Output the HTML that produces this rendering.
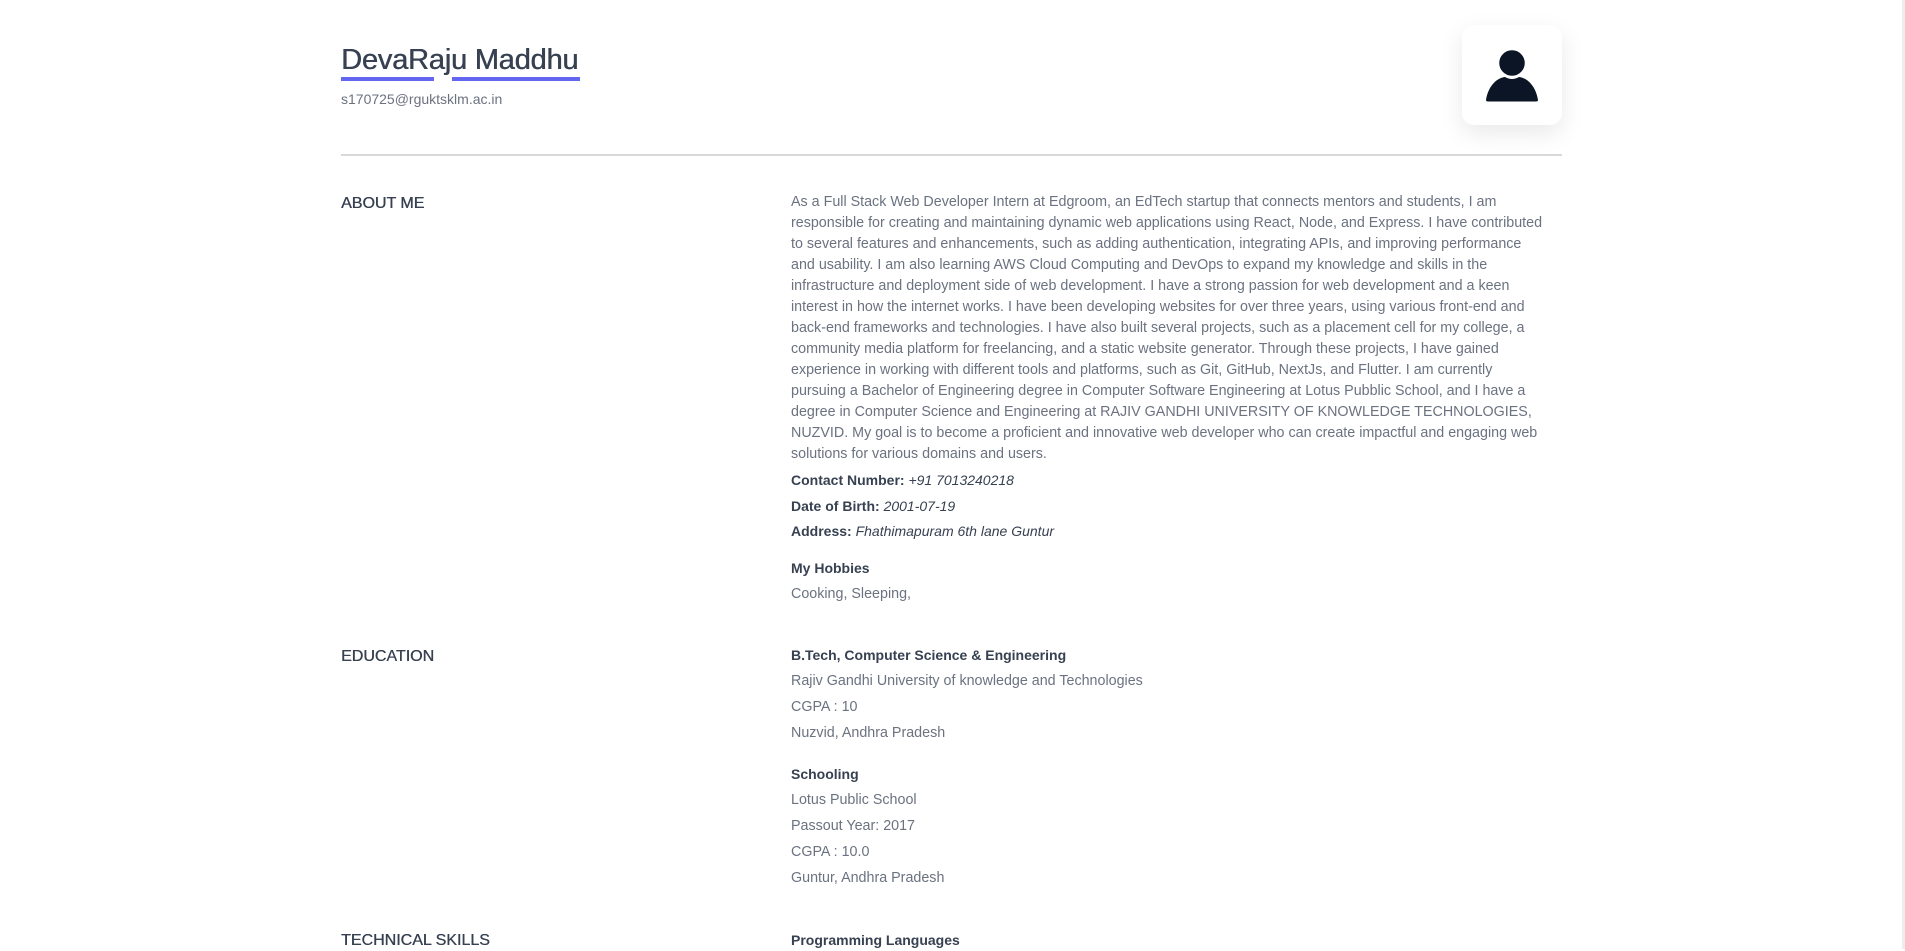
<!DOCTYPE html>
<html><head><meta charset="utf-8"><style>
html,body{margin:0;padding:0;background:#fff;width:1905px;height:949px;overflow:hidden;font-family:"Liberation Sans",sans-serif}
.a{position:absolute;white-space:nowrap}
.p{color:#6b7280;font-size:14.3px;line-height:21px;left:791px}
.h{color:#374151;font-size:14px;font-weight:bold;left:791px;line-height:21px}
.lab{color:#374151;font-size:16px;left:341px;line-height:21px;text-shadow:0.35px 0 0 #374151}
.k{color:#374151;font-size:14px;left:791px;line-height:21px}
.k b{font-weight:bold}
.k i{font-style:italic}
</style></head><body>
<div class="a" style="left:341px;top:42px;font-size:29px;color:#374151;line-height:36px;letter-spacing:-0.2px;text-shadow:0.5px 0 0 #374151">DevaRaju Maddhu</div>
<div class="a" style="left:341px;top:77px;width:93px;height:4px;background:#6366f1"></div>
<div class="a" style="left:452px;top:77px;width:128px;height:4px;background:#6366f1"></div>
<div class="a" style="left:341px;top:89px;font-size:14px;color:#6b7280;line-height:20px">s170725@rguktsklm.ac.in</div>
<div class="a" style="left:1462px;top:25px;width:100px;height:100px;border-radius:12px;background:#fff;box-shadow:0 8px 24px rgba(0,0,0,0.09)">
<svg width="100" height="100" viewBox="0 0 100 100"><path d="M24 75 C26 62 34 53 43 52 Q50 56 57 52 C66 53 74 62 76 75 Q76 76.5 74 76.5 L26 76.5 Q24 76.5 24 75Z" fill="#0b1526"/><circle cx="50" cy="38" r="13.5" fill="#0b1526" stroke="#fff" stroke-width="1.5"/></svg></div>
<div class="a" style="left:341px;top:154px;width:1221px;height:2px;background:#d9d9d9"></div>
<div class="a" style="left:1902px;top:0;width:3px;height:949px;background:#eee"></div>

<div class="a lab" style="top:193px">ABOUT ME</div>
<div class="a p" style="top:192px">As a Full Stack Web Developer Intern at Edgroom, an EdTech startup that connects mentors and students, I am<br>responsible for creating and maintaining dynamic web applications using React, Node, and Express. I have contributed<br>to several features and enhancements, such as adding authentication, integrating APIs, and improving performance<br>and usability. I am also learning AWS Cloud Computing and DevOps to expand my knowledge and skills in the<br>infrastructure and deployment side of web development. I have a strong passion for web development and a keen<br>interest in how the internet works. I have been developing websites for over three years, using various front-end and<br>back-end frameworks and technologies. I have also built several projects, such as a placement cell for my college, a<br>community media platform for freelancing, and a static website generator. Through these projects, I have gained<br>experience in working with different tools and platforms, such as Git, GitHub, NextJs, and Flutter. I am currently<br>pursuing a Bachelor of Engineering degree in Computer Software Engineering at Lotus Pubblic School, and I have a<br>degree in Computer Science and Engineering at RAJIV GANDHI UNIVERSITY OF KNOWLEDGE TECHNOLOGIES,<br>NUZVID. My goal is to become a proficient and innovative web developer who can create impactful and engaging web<br>solutions for various domains and users.</div>
<div class="a k" style="top:470px"><b>Contact Number:</b> <i>+91 7013240218</i></div>
<div class="a k" style="top:496px"><b>Date of Birth:</b> <i>2001-07-19</i></div>
<div class="a k" style="top:521px"><b>Address:</b> <i>Fhathimapuram 6th lane Guntur</i></div>
<div class="a h" style="top:558px">My Hobbies</div>
<div class="a p" style="top:584px">Cooking, Sleeping,</div>

<div class="a lab" style="top:646px">EDUCATION</div>
<div class="a h" style="top:645px">B.Tech, Computer Science &amp; Engineering</div>
<div class="a p" style="top:671px">Rajiv Gandhi University of knowledge and Technologies</div>
<div class="a p" style="top:697px">CGPA : 10</div>
<div class="a p" style="top:723px">Nuzvid, Andhra Pradesh</div>
<div class="a h" style="top:764px">Schooling</div>
<div class="a p" style="top:790px">Lotus Public School</div>
<div class="a p" style="top:816px">Passout Year: 2017</div>
<div class="a p" style="top:842px">CGPA : 10.0</div>
<div class="a p" style="top:868px">Guntur, Andhra Pradesh</div>

<div class="a lab" style="top:930px">TECHNICAL SKILLS</div>
<div class="a h" style="top:930px">Programming Languages</div>
</body></html>
